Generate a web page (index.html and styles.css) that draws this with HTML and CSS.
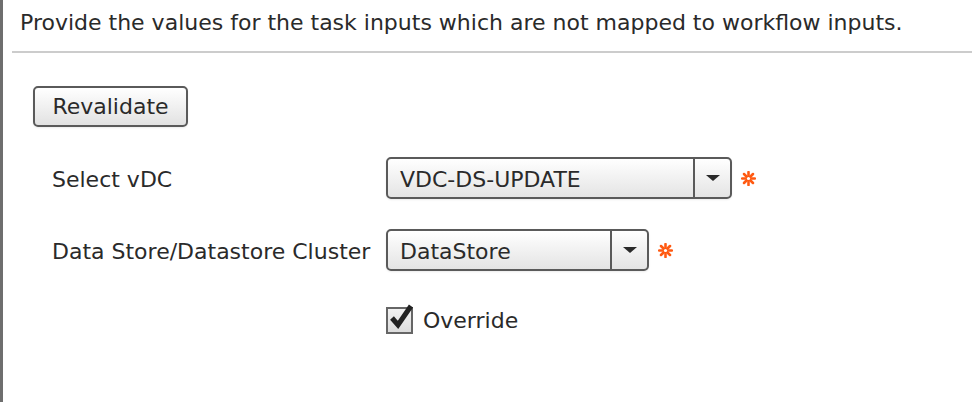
FILE: index.html
```html
<!DOCTYPE html>
<html lang="en">
<head>
    <meta charset="UTF-8">
    <title>Task Inputs</title>
    <link rel="stylesheet" href="styles.css">
</head>
<body>
    <div class="panel">
        <p class="intro">Provide the values for the task inputs which are not mapped to workflow inputs.</p>
        <div class="divider"></div>

        <button class="btn" type="button">Revalidate</button>

        <div class="fields">
            <label class="field-label">Select vDC</label>
            <div class="field-control">
                <div class="combo combo-wide">
                    <span class="combo-value">VDC-DS-UPDATE</span>
                    <span class="combo-arrow"></span>
                </div>
                <svg class="req" width="15" height="15" viewBox="0 0 14 14">
                    <g stroke="#ff5a12" stroke-width="2.4" stroke-linecap="round">
                        <line x1="7" y1="1" x2="7" y2="13"/>
                        <line x1="1" y1="7" x2="13" y2="7"/>
                        <line x1="2.8" y1="2.8" x2="11.2" y2="11.2"/>
                        <line x1="11.2" y1="2.8" x2="2.8" y2="11.2"/>
                    </g>
                    <circle cx="7" cy="7" r="1.5" fill="#fff"/>
                </svg>
            </div>

            <label class="field-label">Data Store/Datastore Cluster</label>
            <div class="field-control">
                <div class="combo combo-narrow">
                    <span class="combo-value">DataStore</span>
                    <span class="combo-arrow"></span>
                </div>
                <svg class="req" width="15" height="15" viewBox="0 0 14 14">
                    <g stroke="#ff5a12" stroke-width="2.4" stroke-linecap="round">
                        <line x1="7" y1="1" x2="7" y2="13"/>
                        <line x1="1" y1="7" x2="13" y2="7"/>
                        <line x1="2.8" y1="2.8" x2="11.2" y2="11.2"/>
                        <line x1="11.2" y1="2.8" x2="2.8" y2="11.2"/>
                    </g>
                    <circle cx="7" cy="7" r="1.5" fill="#fff"/>
                </svg>
            </div>

            <span></span>
            <label class="check">
                <span class="check-box">
                    <svg width="30" height="30" viewBox="0 0 30 30">
                        <path d="M6 15 L12 22 L25 3" fill="none" stroke="#222" stroke-width="5" stroke-linejoin="miter"/>
                    </svg>
                </span>
                Override
            </label>
        </div>
    </div>
</body>
</html>
```

FILE: styles.css
```css
body {
    margin: 0;
    background: #fff;
    font-family: "DejaVu Sans", Verdana, sans-serif;
    color: #2a2a2a;
}

.panel {
    height: 402px;
    border-left: 3px solid #6e6e6e;
    box-sizing: border-box;
}

.intro {
    margin: 0;
    padding: 9px 0 0 17px;
    font-size: 22px;
    line-height: 28px;
}

.divider {
    margin: 14px 0 0 9px;
    height: 2px;
    background: #cccccc;
}

.btn {
    display: block;
    margin: 33px 0 0 30px;
    width: 155px;
    height: 41px;
    padding: 0;
    border: 2px solid #5a5a5a;
    border-radius: 5px;
    background: linear-gradient(#ffffff, #e2e2e2);
    font-family: inherit;
    font-size: 22px;
    color: #2a2a2a;
    box-shadow: 0 1px 2px rgba(0, 0, 0, 0.08);
}

.fields {
    display: grid;
    grid-template-columns: 334px auto;
    grid-auto-rows: 42px;
    row-gap: 30px;
    margin: 30px 0 0 49px;
    align-items: center;
    font-size: 22px;
}

.field-label {
    padding-top: 2px;
}

.field-control {
    display: flex;
    align-items: center;
    gap: 9px;
}

.combo {
    display: flex;
    height: 42px;
    box-sizing: border-box;
    border: 2px solid #5a5a5a;
    border-radius: 5px;
    background: linear-gradient(#ffffff, #e4e4e4);
    box-shadow: 0 1px 2px rgba(0, 0, 0, 0.08);
}

.combo-wide {
    width: 346px;
}

.combo-narrow {
    width: 263px;
}

.combo-value {
    flex: 1;
    padding: 2px 0 0 12px;
    line-height: 38px;
}

.combo-arrow {
    width: 35px;
    border-left: 2px solid #5a5a5a;
    display: flex;
    align-items: center;
    justify-content: center;
}

.combo-arrow::after {
    content: "";
    border-left: 7px solid transparent;
    border-right: 7px solid transparent;
    border-top: 6px solid #2a2a2a;
}

.check {
    display: flex;
    align-items: center;
    gap: 10px;
    margin-top: -4px;
}

.check-box {
    position: relative;
    width: 23px;
    height: 23px;
    border: 2px solid #666;
    background: linear-gradient(#f2f2f2, #dcdcdc);
}

.check-box svg {
    position: absolute;
    left: -2px;
    top: -6px;
}
```
